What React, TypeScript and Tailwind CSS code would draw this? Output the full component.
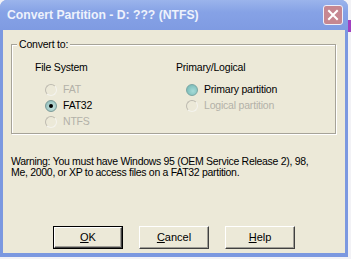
import React from "react";

const font = { fontFamily: '"Liberation Sans", Arial, sans-serif' };

function Radio({ state }: { state: "on" | "off" | "disabled" | "teal" }) {
  if (state === "disabled") {
    return (
      <span className="inline-block w-[12px] h-[12px] rounded-full border border-t-[#bdbab0] border-l-[#bdbab0] border-r-[#f4f3ee] border-b-[#f4f3ee] bg-[#ece9d8]" />
    );
  }
  if (state === "teal") {
    return (
      <span className="inline-block w-[12px] h-[12px] rounded-full bg-[radial-gradient(circle_at_60%_60%,#a6dcd8,#6fb3b0)] border border-[#7aa7a4]" />
    );
  }
  return (
    <span className="relative inline-flex items-center justify-center w-[12px] h-[12px] rounded-full bg-[radial-gradient(circle_at_60%_60%,#c9e4e0,#86b7b3)] border border-[#7a9a98]">
      {state === "on" && <span className="w-[4px] h-[4px] rounded-full bg-black" />}
    </span>
  );
}

function Option({ state, label }: { state: "on" | "off" | "disabled" | "teal"; label: string }) {
  const dis = state === "disabled";
  return (
    <div className="flex items-center h-[16px]">
      <Radio state={state} />
      <span className={`ml-[6px] text-[10.5px] tracking-[-0.2px] ${dis ? "text-[#b3b1a8]" : "text-black"}`}>{label}</span>
    </div>
  );
}

function Btn({ children, def }: { children: React.ReactNode; def?: boolean }) {
  return (
    <div className={`w-[70px] h-[23px] ${def ? "border border-black" : ""} flex`}>
      <div className="flex-1 flex items-center justify-center bg-[#ece9d8] border border-t-white border-l-white border-r-[#404040] border-b-[#404040] shadow-[inset_-1px_-1px_0_#a09e96] text-[11px] text-black">
        {children}
      </div>
    </div>
  );
}

export default function App() {
  return (
    <div className="w-[351px] h-[259px] bg-[#f2f2f6] overflow-hidden relative" style={font}>
      <div className="absolute right-0 top-[20px] w-[3px] h-[12px] bg-[#a040c0]" />
      <div className="w-[348px] h-[257px] flex flex-col bg-[#7b98e0] rounded-t-[7px]">
        <div className="h-[30px] flex items-center justify-between pl-[7px] pr-[5px] rounded-t-[7px] bg-[linear-gradient(#9bb4ec,#86a2e6_40%,#7f9be2)]">
          <span className="text-[12.2px] font-bold text-[#eef2fc]">Convert Partition - D: ??? (NTFS)</span>
          <div className="w-[20px] h-[20px] rounded-[3px] border border-[#eef0fa] bg-[#c68791] flex items-center justify-center">
            <svg width="12" height="12" viewBox="0 0 12 12">
              <path d="M2 2 L10 10 M10 2 L2 10" stroke="white" strokeWidth="2" strokeLinecap="square" />
            </svg>
          </div>
        </div>
        <div className="flex-1 mx-[3px] mb-[4px] bg-[#ece9d8] flex flex-col px-[8px]">
          <div className="relative mt-[14px] mr-[1px] h-[90px] border border-[#a6a398] shadow-[1px_1px_0_white,inset_1px_1px_0_white] pl-[23px] pt-[16px]">
            <span className="absolute left-[5px] top-[-7px] px-[2px] bg-[#ece9d8] text-[10.5px] leading-[12px] tracking-[-0.2px] text-black">
              Convert to:
            </span>
            <div className="flex">
              <div className="w-[141px]">
                <div className="text-[10.5px] leading-[12px] h-[14px] tracking-[-0.2px]">File System</div>
                <div className="ml-[10px] mt-[7px]">
                  <Option state="disabled" label="FAT" />
                  <Option state="on" label="FAT32" />
                  <Option state="disabled" label="NTFS" />
                </div>
              </div>
              <div>
                <div className="text-[10.5px] leading-[12px] h-[14px] tracking-[-0.2px]">Primary/Logical</div>
                <div className="ml-[10px] mt-[7px]">
                  <Option state="teal" label="Primary partition" />
                  <Option state="disabled" label="Logical partition" />
                </div>
              </div>
            </div>
          </div>
          <p className="mt-[22px] text-[10.5px] leading-[11px] tracking-[-0.3px] text-black">
            Warning: You must have Windows 95 (OEM Service Release 2), 98,
            <br />
            Me, 2000, or XP to access files on a FAT32 partition.
          </p>
          <div className="mt-auto mb-[4px] flex justify-center gap-[16px]">
            <Btn def>
              <span><u>O</u>K</span>
            </Btn>
            <Btn>
              <span><u>C</u>ancel</span>
            </Btn>
            <Btn>
              <span><u>H</u>elp</span>
            </Btn>
          </div>
        </div>
      </div>
    </div>
  );
}
